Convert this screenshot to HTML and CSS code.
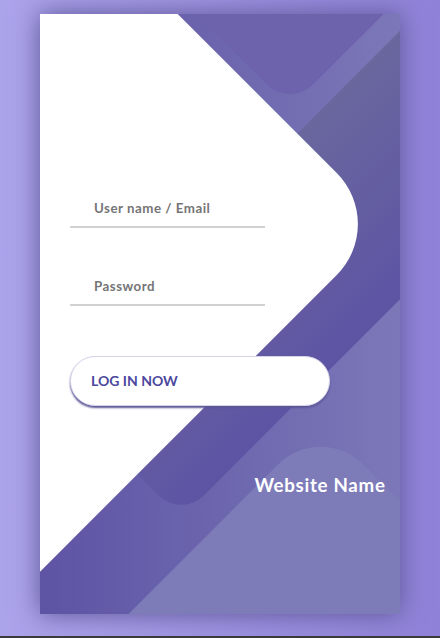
FILE: index.html
```html
<!DOCTYPE html>
<html lang="en">
<head>
<meta charset="utf-8">
<title>Login</title>
<link rel="stylesheet" href="styles.css">
</head>
<body>
<div class="container">
  <div class="screen">
    <div class="screen__background">
      <span class="shape shape4"></span>
      <span class="shape shape3"></span>
      <span class="shape shape2"></span>
      <span class="shape shape1"></span>
    </div>
    <div class="screen__content">
      <form class="login">
        <div class="login__field">
          <input type="text" class="login__input" placeholder="User name / Email">
        </div>
        <div class="login__field">
          <input type="password" class="login__input" placeholder="Password">
        </div>
        <button type="button" class="login__submit">Log In Now</button>
      </form>
      <div class="social-login">
        <h3 class="social-login__title">Website Name</h3>
      </div>
    </div>
  </div>
</div>
</body>
</html>
```

FILE: styles.css
```css
* {
  box-sizing: border-box;
  margin: 0;
  padding: 0;
}

html {
  background: #3a3a3c;
}

body {
  margin: 0;
  height: 636px;
  font-family: Lato, "Liberation Sans", sans-serif;
  background: linear-gradient(90deg, #aca4ea, #8f81d7);
  overflow: hidden;
}

.container {
  display: flex;
  justify-content: center;
  padding-top: 14px;
}

.screen {
  position: relative;
  width: 360px;
  height: 600px;
  background: linear-gradient(90deg, #5D54A4, #7C78B8);
  box-shadow: 0 0 24px #5C5696;
}

.screen__background {
  position: absolute;
  top: 0;
  left: 0;
  right: 0;
  bottom: 0;
  z-index: 0;
  overflow: hidden;
  clip-path: inset(0 0 0 0);
}

.shape {
  position: absolute;
  transform: rotate(45deg);
}

.shape1 {
  width: 520px;
  height: 520px;
  background: #fff;
  top: -50px;
  right: 120px;
  border-radius: 0 72px 0 0;
}

.shape2 {
  width: 220px;
  height: 220px;
  background: #6C63AC;
  top: -172px;
  right: 0;
  border-radius: 32px;
}

.shape3 {
  width: 190px;
  height: 540px;
  background: linear-gradient(270deg, #5D54A4, #6A679E);
  top: -24px;
  right: 0;
  border-radius: 32px;
}

.shape4 {
  width: 200px;
  height: 400px;
  background: #7E7BB9;
  top: 420px;
  right: 50px;
  border-radius: 60px;
}

.screen__content {
  position: relative;
  z-index: 1;
  height: 100%;
  display: flex;
  flex-direction: column;
}

.login {
  width: 320px;
  padding: 156px 30px 30px;
}

.login__field {
  padding: 20px 0;
}

.login__input {
  display: block;
  width: 75%;
  border: none;
  border-bottom: 2px solid #D1D1D4;
  background: none;
  padding: 10px 10px 10px 24px;
  font-family: Lato, "Liberation Sans", sans-serif;
  font-size: 13.33px;
  line-height: 16px;
  font-weight: 700;
  letter-spacing: 0.5px;
  color: #444;
  outline: none;
}

.login__input::placeholder {
  color: #757575;
  opacity: 1;
}

.login__submit {
  display: flex;
  align-items: center;
  width: 100%;
  margin-top: 30px;
  padding: 16px 20px;
  background: #fff;
  border: 1px solid #D4D3E8;
  border-radius: 26px;
  font-family: Lato, "Liberation Sans", sans-serif;
  font-size: 14px;
  line-height: 16px;
  font-weight: 700;
  text-transform: uppercase;
  color: #4C489D;
  box-shadow: 0 2px 2px #5C5696;
  cursor: pointer;
}

.social-login {
  margin-top: auto;
  align-self: flex-end;
  width: 160px;
  height: 140px;
  text-align: center;
  color: #fff;
}

.social-login__title {
  font-size: 18.72px;
  line-height: 22px;
  font-weight: 700;
  letter-spacing: 0.7px;
}
```
